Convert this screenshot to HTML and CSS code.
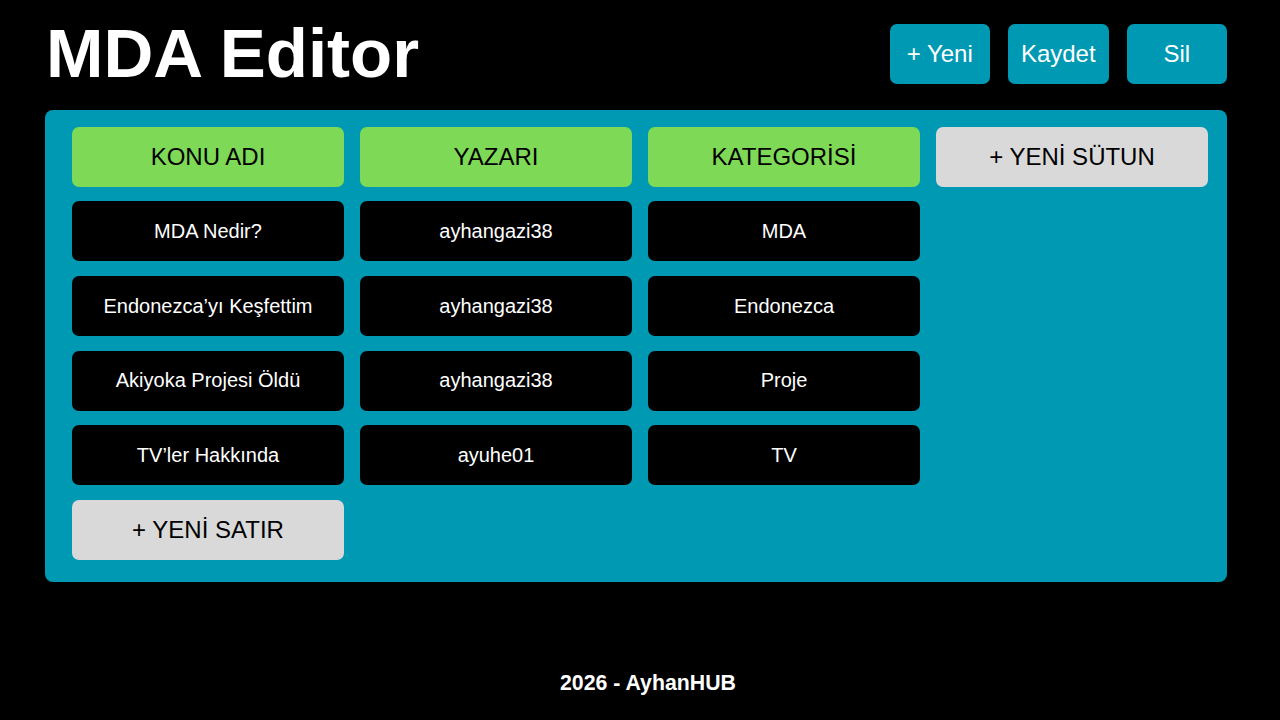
FILE: index.html
```html
<!DOCTYPE html>
<html lang="tr">
<head>
<meta charset="utf-8">
<title>MDA Editor</title>
<link rel="stylesheet" href="styles.css">
</head>
<body>
<div class="page">
  <header class="topbar">
    <h1 class="title">MDA Editor</h1>
    <div class="actions">
      <button class="btn">+ Yeni</button>
      <button class="btn">Kaydet</button>
      <button class="btn">Sil</button>
    </div>
  </header>
  <main class="panel">
    <div class="grid">
      <div class="cell head">KONU ADI</div>
      <div class="cell head">YAZARI</div>
      <div class="cell head">KATEGORİSİ</div>
      <div class="cell add">+ YENİ SÜTUN</div>

      <div class="cell data">MDA Nedir?</div>
      <div class="cell data">ayhangazi38</div>
      <div class="cell data">MDA</div>
      <div class="cell empty"></div>

      <div class="cell data">Endonezca’yı Keşfettim</div>
      <div class="cell data">ayhangazi38</div>
      <div class="cell data">Endonezca</div>
      <div class="cell empty"></div>

      <div class="cell data">Akiyoka Projesi Öldü</div>
      <div class="cell data">ayhangazi38</div>
      <div class="cell data">Proje</div>
      <div class="cell empty"></div>

      <div class="cell data">TV’ler Hakkında</div>
      <div class="cell data">ayuhe01</div>
      <div class="cell data">TV</div>
      <div class="cell empty"></div>

      <div class="cell add">+ YENİ SATIR</div>
    </div>
  </main>
  <footer class="footer">2026 - AyhanHUB</footer>
</div>
</body>
</html>
```
FILE: styles.css
```css
* { box-sizing: border-box; }
html, body { margin: 0; padding: 0; background: #000; }
body {
  font-family: "Liberation Sans", Arial, sans-serif;
  color: #fff;
  width: 1280px;
  height: 720px;
  overflow: hidden;
}
.page {
  padding: 0 53px 0 45px;
}
.topbar {
  display: flex;
  align-items: center;
  justify-content: space-between;
  padding-top: 24px;
  height: 84px;
  margin-bottom: 26px;
}
.title {
  margin: 0 0 0 1px;
  font-size: 69px;
  font-weight: 700;
  line-height: 60px;
  letter-spacing: 0;
}
.actions {
  display: flex;
  gap: 18px;
}
.btn {
  width: 100.5px;
  height: 60px;
  border: none;
  border-radius: 7px;
  background: #0099b3;
  color: #fff;
  font-family: "Liberation Sans", Arial, sans-serif;
  font-size: 24px;
  padding: 0;
}
.panel {
  background: #0099b3;
  border-radius: 8px;
  height: 472px;
  padding: 16.7px 19px 0 27px;
}
.grid {
  display: grid;
  grid-template-columns: repeat(4, 272px);
  grid-auto-rows: 60px;
  column-gap: 16px;
  row-gap: 14.67px;
}
.cell {
  border-radius: 7px;
  display: flex;
  align-items: center;
  justify-content: center;
  text-align: center;
}
.head {
  background: #7ed957;
  color: #000;
  font-size: 24px;
}
.add {
  background: #d9d9d9;
  color: #000;
  font-size: 24px;
}
.data {
  background: #000;
  color: #fff;
  font-size: 20px;
}
.empty { background: transparent; }
.footer {
  margin-top: 89px;
  padding-left: 24px;
  text-align: center;
  font-size: 21.3px;
  font-weight: 700;
}
```
